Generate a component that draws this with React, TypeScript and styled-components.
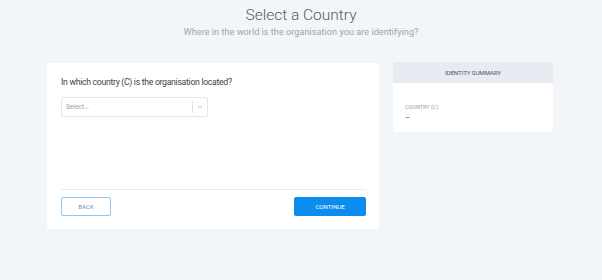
import React from "react";
import styled, { createGlobalStyle } from "styled-components";

const Global = createGlobalStyle`
  html, body { margin: 0; padding: 0; background: #f2f6f9; }
  body { font-family: Roboto, "Noto Sans", Arial, sans-serif; }
  * { box-sizing: border-box; }
`;

const Page = styled.div`
  width: 602px;
  height: 280px;
  background: #f2f6f9;
  display: flex;
  flex-direction: column;
  align-items: center;
`;

const Header = styled.header`
  display: flex;
  flex-direction: column;
  align-items: center;
  padding-top: 5px;
`;

const Title = styled.h1`
  margin: 0;
  font-size: 15.5px;
  line-height: 20px;
  font-weight: 300;
  color: #555a5f;
`;

const Subtitle = styled.p`
  margin: 1px 0 0;
  font-size: 9.2px;
  line-height: 12px;
  font-weight: 400;
  color: #a0a4a8;
`;

const Columns = styled.div`
  display: flex;
  align-items: flex-start;
  gap: 14px;
  margin-top: 25px;
  width: 100%;
  padding-left: 47px;
`;

const Card = styled.section`
  width: 332px;
  height: 166px;
  background: #fff;
  border-radius: 2px;
  box-shadow: 0 0 1px rgba(0, 0, 0, 0.04);
  padding: 0 13px 0 14px;
  display: flex;
  flex-direction: column;
`;

const Question = styled.h2`
  margin: 13px 0 0;
  font-size: 8.7px;
  letter-spacing: -0.3px;
  line-height: 13px;
  font-weight: 400;
  color: #404346;
`;

const SelectBox = styled.div`
  margin-top: 8px;
  width: 147px;
  height: 20px;
  border: 1px solid #e3e6ea;
  border-radius: 2px;
  display: flex;
  align-items: center;
  padding-left: 4px;
`;

const Placeholder = styled.span`
  flex: 1;
  font-size: 6.5px;
  color: #9a9ea3;
`;

const Sep = styled.span`
  width: 1px;
  height: 12px;
  background: #dfe2e6;
`;

const Chevron = styled.span`
  width: 14px;
  display: flex;
  justify-content: center;
  align-items: center;
`;

const Spacer = styled.div`
  flex: 1;
`;

const Divider = styled.hr`
  margin: 0;
  border: none;
  border-top: 1px solid #e9ecef;
`;

const Actions = styled.div`
  display: flex;
  justify-content: space-between;
  padding: 7px 0 13px;
`;

const Button = styled.button<{ $primary?: boolean }>`
  height: 19px;
  width: ${(p) => (p.$primary ? "72px" : "50px")};
  border-radius: 2px;
  font-family: Roboto, Arial, sans-serif;
  font-size: 6.2px;
  letter-spacing: -0.1px;
  text-transform: uppercase;
  cursor: pointer;
  padding: 0;
  border: 1px solid ${(p) => (p.$primary ? "#0b8cee" : "#8fc5f5")};
  background: ${(p) => (p.$primary ? "#0b8cee" : "#fff")};
  color: ${(p) => (p.$primary ? "#fff" : "#6f96c4")};
`;

const Summary = styled.aside`
  width: 160px;
  height: 70px;
  background: #fff;
  border-radius: 2px;
  overflow: hidden;
  margin-top: -1px;
`;

const SummaryHead = styled.div`
  height: 21px;
  background: #e8ebf2;
  display: flex;
  align-items: center;
  justify-content: center;
  font-size: 6.2px;
  color: #555;
  letter-spacing: -0.1px;
`;

const SummaryBody = styled.div`
  padding: 21px 12px 0;
`;

const Label = styled.div`
  font-size: 5.5px;
  color: #9a9ea3;
  line-height: 7px;
`;

const Value = styled.div`
  font-size: 8px;
  color: #555;
  line-height: 9px;
  margin-top: 2px;
`;

export default function App() {
  return (
    <Page>
      <Global />
      <Header>
        <Title>Select a Country</Title>
        <Subtitle>Where in the world is the organisation you are identifying?</Subtitle>
      </Header>
      <Columns>
        <Card>
          <Question>In which country (C) is the organisation located?</Question>
          <SelectBox>
            <Placeholder>Select...</Placeholder>
            <Sep />
            <Chevron>
              <svg width="6" height="4" viewBox="0 0 6 4">
                <path d="M0.8 0.8 L3 3 L5.2 0.8" fill="none" stroke="#b5b9be" strokeWidth="0.8" />
              </svg>
            </Chevron>
          </SelectBox>
          <Spacer />
          <Divider />
          <Actions>
            <Button>Back</Button>
            <Button $primary>Continue</Button>
          </Actions>
        </Card>
        <Summary>
          <SummaryHead>IDENTITY SUMMARY</SummaryHead>
          <SummaryBody>
            <Label>COUNTRY (C)</Label>
            <Value>–</Value>
          </SummaryBody>
        </Summary>
      </Columns>
    </Page>
  );
}
